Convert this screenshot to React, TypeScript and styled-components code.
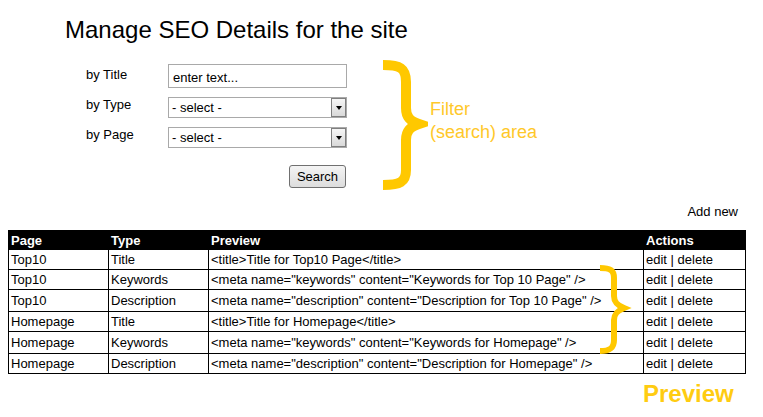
import React from "react";
import styled, { createGlobalStyle } from "styled-components";

const GlobalStyle = createGlobalStyle`
  html, body { margin: 0; padding: 0; background: #ffffff; }
  body { font-family: "Liberation Sans", Arial, sans-serif; color: #000; }
`;

const Page = styled.div`
  width: 763px;
  height: 417px;
  padding-top: 16px;
  box-sizing: border-box;
  overflow: hidden;
`;

const Title = styled.h1`
  margin: 0 0 0 65px;
  font-size: 24px;
  line-height: 27px;
  font-weight: normal;
`;

const FilterSection = styled.div`
  display: flex;
  align-items: flex-start;
  margin-top: 15px;
  height: 134px;
`;

const Form = styled.div`
  display: grid;
  grid-template-columns: 82px 179px;
  grid-template-rows: 24px 21px 21px 23px;
  row-gap: 9px;
  margin: 6px 0 0 86px;
  font-size: 13px;
`;

const FieldLabel = styled.div<{ $offset: number }>`
  line-height: 15px;
  padding-top: ${(p) => p.$offset}px;
`;

const TextInput = styled.div`
  box-sizing: border-box;
  height: 24px;
  border: 1px solid #a9a9a9;
  padding: 0 4px;
  display: flex;
  align-items: center;
  padding-top: 3px;
  font-size: 13px;
  color: #000;
`;

const Select = styled.div`
  box-sizing: border-box;
  height: 21px;
  border: 1px solid #a9a9a9;
  display: flex;
  align-items: stretch;
  font-size: 13px;
`;

const SelectValue = styled.div`
  flex: 1;
  display: flex;
  align-items: center;
  padding-left: 3px;
`;

const ArrowButton = styled.div`
  width: 15px;
  box-sizing: border-box;
  border: 1px solid #7f7f7f;
  margin: 0 0 0 0;
  background: linear-gradient(#f6f6f6, #d9d9d9);
  display: flex;
  align-items: center;
  justify-content: center;
`;

const Triangle = styled.div`
  width: 0;
  height: 0;
  border-left: 3.5px solid transparent;
  border-right: 3.5px solid transparent;
  border-top: 4px solid #000;
`;

const ButtonRow = styled.div`
  grid-column: 2;
  display: flex;
  justify-content: flex-end;
  padding-right: 1px;
  margin-top: 8px;
`;

const SearchButton = styled.button`
  width: 57px;
  height: 23px;
  border: 1px solid #707070;
  border-radius: 3px;
  background: linear-gradient(#f4f4f4, #dddddd);
  font-family: "Liberation Sans", Arial, sans-serif;
  font-size: 13px;
  color: #000;
  padding: 0;
`;

const BigBrace = styled.svg`
  margin-left: 31px;
  flex: none;
`;

const FilterNote = styled.div`
  margin: 40px 0 0 2px;
  font-size: 18px;
  line-height: 23px;
  color: #ffc82a;
`;

const AddNewRow = styled.div`
  margin-top: 12px;
  width: 738px;
  text-align: right;
  font-size: 13px;
  line-height: 15px;
`;

const TableWrap = styled.div`
  position: relative;
  margin: 11px 0 0 8px;
  width: 737px;
`;

const Table = styled.table`
  border-collapse: collapse;
  width: 737px;
  table-layout: fixed;
  font-size: 13px;
`;

const HeadCell = styled.th<{ $w: number }>`
  width: ${(p) => p.$w}px;
  background: #000;
  color: #fff;
  font-weight: bold;
  text-align: left;
  padding: 0 2px;
  height: 19px;
  line-height: 15px;
  border: 1px solid #000;
  box-sizing: border-box;
`;

const Row = styled.tr<{ $h: number }>`
  height: ${(p) => p.$h}px;
`;

const Cell = styled.td`
  border: 1px solid #000;
  padding: 0 2px;
  line-height: 15px;
  white-space: nowrap;
  overflow: hidden;
`;

const SmallBrace = styled.svg`
  position: absolute;
  left: 590px;
  top: 32px;
`;

const PreviewNote = styled.div`
  margin: 6px 0 0 643px;
  font-size: 24px;
  line-height: 28px;
  font-weight: bold;
  color: #ffcc11;
`;

type SeoRow = { page: string; type: string; preview: string; h: number };

const rows: SeoRow[] = [
  { page: "Top10", type: "Title", preview: "<title>Title for Top10 Page</title>", h: 20 },
  {
    page: "Top10",
    type: "Keywords",
    preview: '<meta name="keywords" content="Keywords for Top 10 Page" />',
    h: 20,
  },
  {
    page: "Top10",
    type: "Description",
    preview: '<meta name="description" content="Description for Top 10 Page" />',
    h: 22,
  },
  { page: "Homepage", type: "Title", preview: "<title>Title for Homepage</title>", h: 20 },
  {
    page: "Homepage",
    type: "Keywords",
    preview: '<meta name="keywords" content="Keywords for Homepage" />',
    h: 22,
  },
  {
    page: "Homepage",
    type: "Description",
    preview: '<meta name="description" content="Description for Homepage" />',
    h: 20,
  },
];

const DropDown: React.FC = () => (
  <Select>
    <SelectValue>- select -</SelectValue>
    <ArrowButton>
      <Triangle />
    </ArrowButton>
  </Select>
);

export default function App() {
  return (
    <>
      <GlobalStyle />
      <Page>
        <Title>Manage SEO Details for the site</Title>
        <FilterSection>
          <Form>
            <FieldLabel $offset={3}>by Title</FieldLabel>
            <TextInput>enter text...</TextInput>
            <FieldLabel $offset={0}>by Type</FieldLabel>
            <DropDown />
            <FieldLabel $offset={0}>by Page</FieldLabel>
            <DropDown />
            <ButtonRow>
              <SearchButton>Search</SearchButton>
            </ButtonRow>
          </Form>
          <BigBrace width={50} height={134} viewBox="378 58 50 134">
            <path
              d="M383 65 C400 65 406 68 406 82 L406 108 C406 117 410 121 419 124 C410 127 406 131 406 140 L406 170 C406 182 400 185 383 185"
              fill="none"
              stroke="#ffc800"
              strokeWidth={10}
              strokeLinejoin="miter"
            />
          </BigBrace>
          <FilterNote>
            Filter
            <br />
            (search) area
          </FilterNote>
        </FilterSection>
        <AddNewRow>Add new</AddNewRow>
        <TableWrap>
          <Table>
            <thead>
              <tr>
                <HeadCell $w={100}>Page</HeadCell>
                <HeadCell $w={100}>Type</HeadCell>
                <HeadCell $w={435}>Preview</HeadCell>
                <HeadCell $w={102}>Actions</HeadCell>
              </tr>
            </thead>
            <tbody>
              {rows.map((r, i) => (
                <Row key={i} $h={r.h}>
                  <Cell>{r.page}</Cell>
                  <Cell>{r.type}</Cell>
                  <Cell>{r.preview}</Cell>
                  <Cell>edit | delete</Cell>
                </Row>
              ))}
            </tbody>
          </Table>
          <SmallBrace width={40} height={96} viewBox="598 262 40 96">
            <path
              d="M600 268 C610 268 614 270 614 278 L614 296 C614 302 617 305 624 308 C617 311 614 314 614 320 L614 340 C614 348 610 351 600 351"
              fill="none"
              stroke="#ffc800"
              strokeWidth={6}
            />
          </SmallBrace>
        </TableWrap>
        <PreviewNote>Preview</PreviewNote>
      </Page>
    </>
  );
}
